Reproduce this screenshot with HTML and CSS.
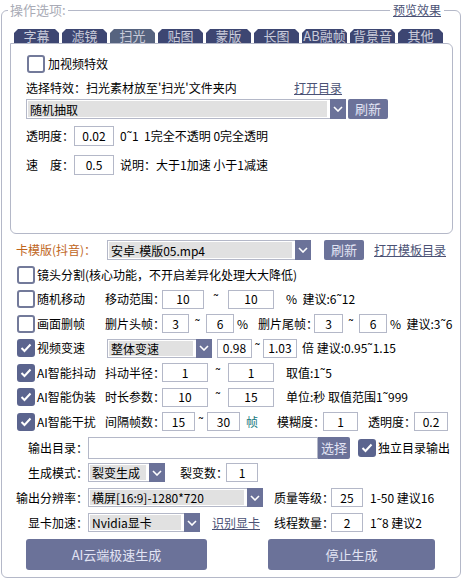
FILE: index.html
```html
<!DOCTYPE html>
<html lang="zh-CN">
  <head>
    <meta charset="UTF-8" />
    <title>操作选项</title>
    <link rel="stylesheet" href="styles.css">
  </head>
  <body>
    <div class="group">
      <span class="group-title">操作选项:</span>
      <a class="group-link" href="#">预览效果</a>

      <div class="tabs">
        <div class="tab">字幕</div>
        <div class="tab">滤镜</div>
        <div class="tab tab--active">扫光</div>
        <div class="tab">贴图</div>
        <div class="tab">蒙版</div>
        <div class="tab">长图</div>
        <div class="tab">AB融帧</div>
        <div class="tab">背景音</div>
        <div class="tab">其他</div>
      </div>

      <div class="panel">
        <label class="p-check"><span class="box"></span>加视频特效</label>
        <div class="p-line">
          <span class="p-desc">选择特效：扫光素材放至'扫光'文件夹内</span>
          <a class="link" href="#">打开目录</a>
        </div>
        <div class="p-select-row">
          <div class="select w320">
            <span class="select__value">随机抽取</span>
            <span class="select__arrow"><svg width="10" height="6" viewBox="0 0 10 6"><polyline points="1,1 5,5 9,1" fill="none" stroke="#fff" stroke-width="1.6"/></svg></span>
          </div>
          <div class="btn w40 h20">刷新</div>
        </div>
        <div class="p-field">
          <span class="w48">透明度：</span>
          <span class="num w40 h20">0.02</span>
          <span class="note ml6">0˜1&nbsp;&nbsp;1完全不透明 0完全透明</span>
        </div>
        <div class="p-field p-field--second">
          <span class="w48">速　度：</span>
          <span class="num w40 h20">0.5</span>
          <span class="note ml6">说明：大于1加速 小于1减速</span>
        </div>
      </div>

      <div class="rows">
        <div class="row row--tpl">
          <span class="lbl-tpl">卡模版(抖音)：</span>
          <div class="select w204">
            <span class="select__value">安卓-模版05.mp4</span>
            <span class="select__arrow"><svg width="10" height="6" viewBox="0 0 10 6"><polyline points="1,1 5,5 9,1" fill="none" stroke="#fff" stroke-width="1.6"/></svg></span>
          </div>
          <div class="btn w40 h20 ml13">刷新</div>
          <a class="link ml10" href="#">打开模板目录</a>
        </div>

        <div class="row">
          <label class="check"><span class="box"></span>镜头分割(核心功能，不开启差异化处理大大降低)</label>
        </div>

        <div class="row">
          <label class="check cell"><span class="box"></span>随机移动</label>
          <span class="w57">移动范围：</span>
          <span class="num w42">10</span>
          <span class="sep w24">˜</span>
          <span class="num w46">10</span>
          <span class="note ml12">%&nbsp;&nbsp;建议:6˜12</span>
        </div>

        <div class="row">
          <label class="check cell"><span class="box"></span>画面删帧</label>
          <span class="w57">删片头帧：</span>
          <span class="num w27">3</span>
          <span class="sep w17">˜</span>
          <span class="num w28">6</span>
          <span class="ml3 w21">%</span>
          <span class="w56">删片尾帧：</span>
          <span class="num w29">3</span>
          <span class="sep w16">˜</span>
          <span class="num w28">6</span>
          <span class="note ml3">%&nbsp;&nbsp;建议:3˜6</span>
        </div>

        <div class="row">
          <label class="check cell cell--wide"><span class="box box--on"><svg width="12" height="10" viewBox="0 0 12 10"><polyline points="1.5,5 4.5,8 10.5,1.5" fill="none" stroke="#fff" stroke-width="2"/></svg></span>视频变速</label>
          <div class="select w105 h19">
            <span class="select__value">整体变速</span>
            <span class="select__arrow"><svg width="10" height="6" viewBox="0 0 10 6"><polyline points="1,1 5,5 9,1" fill="none" stroke="#fff" stroke-width="1.6"/></svg></span>
          </div>
          <span class="num w35 ml5">0.98</span>
          <span class="sep w11">˜</span>
          <span class="num w34">1.03</span>
          <span class="note ml5">倍 建议:0.95˜1.15</span>
        </div>

        <div class="row">
          <label class="check cell"><span class="box box--on"><svg width="12" height="10" viewBox="0 0 12 10"><polyline points="1.5,5 4.5,8 10.5,1.5" fill="none" stroke="#fff" stroke-width="2"/></svg></span>AI智能抖动</label>
          <span class="w57">抖动半径：</span>
          <span class="num w46">1</span>
          <span class="sep w20">˜</span>
          <span class="num w46">1</span>
          <span class="note ml12">取值:1˜5</span>
        </div>

        <div class="row">
          <label class="check cell"><span class="box box--on"><svg width="12" height="10" viewBox="0 0 12 10"><polyline points="1.5,5 4.5,8 10.5,1.5" fill="none" stroke="#fff" stroke-width="2"/></svg></span>AI智能伪装</label>
          <span class="w57">时长参数：</span>
          <span class="num w46">10</span>
          <span class="sep w20">˜</span>
          <span class="num w46">15</span>
          <span class="note ml12">单位:秒 取值范围1˜999</span>
        </div>

        <div class="row">
          <label class="check cell"><span class="box box--on"><svg width="12" height="10" viewBox="0 0 12 10"><polyline points="1.5,5 4.5,8 10.5,1.5" fill="none" stroke="#fff" stroke-width="2"/></svg></span>AI智能干扰</label>
          <span class="w57">间隔帧数：</span>
          <span class="num w33">15</span>
          <span class="sep w12">˜</span>
          <span class="num w33">30</span>
          <span class="frame ml6 w12">帧</span>
          <span class="ml19 w46">模糊度：</span>
          <span class="num w35">1</span>
          <span class="ml10 w46">透明度：</span>
          <span class="num w34">0.2</span>
        </div>
      </div>

      <div class="rows rows--out">
        <div class="row">
          <span class="lbl-out">输出目录：</span>
          <span class="num w230 h22"></span>
          <div class="btn w32 h22 btn--flat">选择</div>
          <label class="check ml8"><span class="box box--on"><svg width="12" height="10" viewBox="0 0 12 10"><polyline points="1.5,5 4.5,8 10.5,1.5" fill="none" stroke="#fff" stroke-width="2"/></svg></span>独立目录输出</label>
        </div>

        <div class="row">
          <span class="lbl-out">生成模式：</span>
          <div class="select w77 h19">
            <span class="select__value">裂变生成</span>
            <span class="select__arrow"><svg width="10" height="6" viewBox="0 0 10 6"><polyline points="1,1 5,5 9,1" fill="none" stroke="#fff" stroke-width="1.6"/></svg></span>
          </div>
          <span class="ml15 w46">裂变数：</span>
          <span class="num w32">1</span>
        </div>

        <div class="row">
          <span class="lbl-out">输出分辨率：</span>
          <div class="select w175 h19">
            <span class="select__value">横屏[16:9]-1280*720</span>
            <span class="select__arrow"><svg width="10" height="6" viewBox="0 0 10 6"><polyline points="1,1 5,5 9,1" fill="none" stroke="#fff" stroke-width="1.6"/></svg></span>
          </div>
          <span class="ml11 w57">质量等级：</span>
          <span class="num w32">25</span>
          <span class="note ml7">1-50 建议16</span>
        </div>

        <div class="row">
          <span class="lbl-out">显卡加速：</span>
          <div class="select w112 h19">
            <span class="select__value">Nvidia显卡</span>
            <span class="select__arrow"><svg width="10" height="6" viewBox="0 0 10 6"><polyline points="1,1 5,5 9,1" fill="none" stroke="#fff" stroke-width="1.6"/></svg></span>
          </div>
          <span class="ml12 w62"><a class="link" href="#">识别显卡</a></span>
          <span class="w57">线程数量：</span>
          <span class="num w32">2</span>
          <span class="note ml7">1˜8 建议2</span>
        </div>
      </div>

      <div class="actions">
        <div class="btn btn--big btn--gen">AI云端极速生成</div>
        <div class="btn btn--big btn--stop">停止生成</div>
      </div>
    </div>
  </body>
</html>
```

FILE: styles.css
```css
* {
  margin: 0;
  padding: 0;
  box-sizing: border-box;
}

body {
  width: 462px;
  height: 580px;
  overflow: hidden;
  background: #fff;
  color: #000;
  font-family: "Noto Sans CJK SC", "Noto Sans", sans-serif;
  font-size: 12px;
  line-height: 16px;
}

a {
  color: inherit;
}

/* outer group box */
.group {
  position: relative;
  height: 568px;
  margin: 10px 1px 0;
  border: 1px solid #b4b8c8;
  border-radius: 6px;
}

.group-title {
  position: absolute;
  top: -10px;
  left: 6px;
  padding: 0 2px;
  background: #fff;
  color: #a9abb6;
  font-size: 13px;
  line-height: 18px;
}

.group-link {
  position: absolute;
  top: -9px;
  right: 16px;
  padding: 0 3px;
  background: #fff;
  color: #4b5275;
  text-decoration: underline;
}

/* tabs */
.tabs {
  display: flex;
  gap: 3px;
  height: 14px;
  margin: 18px 0 0 12px;
}

.tab {
  width: 45px;
  height: 14px;
  background: #3d4672;
  color: #c9cbda;
  font-size: 13px;
  line-height: 14px;
  text-align: center;
  white-space: nowrap;
  clip-path: polygon(4px 0, calc(100% - 4px) 0, 100% 4px, 100% 100%, 0 100%, 0 4px);
}

.tab--active {
  background: #56637f;
}

.panel {
  width: 443px;
  height: 191px;
  margin-left: 8px;
  padding: 10px 0 0 15px;
  border: 1px solid #b4b8c8;
  border-radius: 0 6px 6px 6px;
}

.p-check {
  display: flex;
  align-items: center;
  gap: 3px;
  height: 18px;
  margin: 1px 0 0 1px;
}

.p-line {
  display: flex;
  align-items: center;
  height: 20px;
  margin-top: 5px;
}

.p-desc {
  width: 268px;
}

.p-select-row {
  display: flex;
  gap: 2px;
  height: 20px;
  margin-top: 1px;
}

.p-field {
  display: flex;
  align-items: center;
  height: 20px;
  margin-top: 7px;
}

.p-field--second {
  margin-top: 9px;
}

/* option rows */
.rows {
  margin-top: 4px;
}

.row {
  display: flex;
  align-items: center;
  height: 24.5px;
  padding-left: 15px;
  white-space: nowrap;
}

.row--tpl {
  padding-left: 14px;
}

.rows--out {
  margin-top: 1px;
}

.rows--out .row {
  height: 25px;
  padding-left: 0;
}

.lbl-tpl {
  width: 91px;
  color: #c0651a;
}

.lbl-out {
  width: 86px;
  text-align: right;
}

.check {
  display: flex;
  align-items: center;
  gap: 2px;
}

.cell {
  width: 88px;
}

.cell--wide {
  width: 90px;
}

.box {
  flex: none;
  display: flex;
  align-items: center;
  justify-content: center;
  width: 18px;
  height: 18px;
  border: 2px solid #737a9a;
  border-radius: 3px;
  background: #fff;
}

.box--on {
  border-color: #5b648e;
  background: #5b648e;
}

.num {
  flex: none;
  display: flex;
  align-items: center;
  justify-content: center;
  height: 19px;
  border: 1px solid #b4b8c8;
  background: #fff;
}

.sep {
  flex: none;
  text-align: center;
}

.frame {
  color: #1a7a80;
}

.link {
  color: #4b5275;
  text-decoration: underline;
}

.select {
  flex: none;
  display: flex;
  height: 20px;
  padding: 1px;
  border: 1px solid #b4b8c8;
  background: #fff;
}

.select__value {
  flex: 1;
  display: flex;
  align-items: center;
  margin-right: 3px;
  padding-left: 2px;
  background: #e1e1e1;
  line-height: 15px;
  white-space: nowrap;
}

.select__arrow {
  display: flex;
  align-items: center;
  justify-content: center;
  width: 16px;
  margin: -2px -2px -2px 0;
  background: #6b7299;
}

.btn {
  flex: none;
  display: flex;
  align-items: center;
  justify-content: center;
  border-radius: 2px;
  background: #6b7299;
  color: #e2e4f4;
  font-size: 13px;
}

.btn--flat {
  border-radius: 0 2px 2px 0;
}

.actions {
  display: flex;
  margin-top: 4px;
  padding-left: 24px;
}

.btn--big {
  height: 31px;
  border-radius: 3px;
}

.btn--gen {
  width: 181px;
}

.btn--stop {
  width: 167px;
  margin-left: 61px;
}

/* sizes */
.w11 { width: 11px; flex: none; }
.w12 { width: 12px; flex: none; }
.w16 { width: 16px; flex: none; }
.w17 { width: 17px; flex: none; }
.w20 { width: 20px; flex: none; }
.w21 { width: 21px; flex: none; }
.w24 { width: 24px; flex: none; }
.w27 { width: 27px; }
.w28 { width: 28px; }
.w29 { width: 29px; }
.w32 { width: 32px; }
.w33 { width: 33px; }
.w34 { width: 34px; }
.w35 { width: 35px; }
.w40 { width: 40px; }
.w42 { width: 42px; }
.w46 { width: 46px; flex: none; }
.w48 { width: 48px; flex: none; }
.w56 { width: 56px; flex: none; }
.w57 { width: 57px; flex: none; }
.w62 { width: 62px; flex: none; }
.w77 { width: 77px; }
.w105 { width: 105px; }
.w112 { width: 112px; }
.w175 { width: 175px; }
.w204 { width: 204px; }
.w230 { width: 230px; }
.w320 { width: 320px; }

.h19 { height: 19px; }
.h20 { height: 20px; }
.h22 { height: 22px; }

.ml3 { margin-left: 3px; }
.ml5 { margin-left: 5px; }
.ml6 { margin-left: 6px; }
.ml7 { margin-left: 7px; }
.ml8 { margin-left: 8px; }
.ml10 { margin-left: 10px; }
.ml11 { margin-left: 11px; }
.ml12 { margin-left: 12px; }
.ml13 { margin-left: 13px; }
.ml15 { margin-left: 15px; }
.ml19 { margin-left: 19px; }
```
